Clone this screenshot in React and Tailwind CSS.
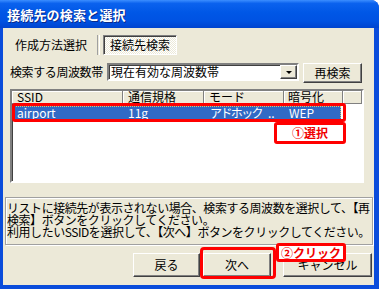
export default function App() {
  const raised =
    "bg-[#ECE9D8] border border-t-white border-l-white border-r-[#404040] border-b-[#404040] shadow-[inset_-1px_-1px_0_#808080]";
  const sunken =
    "border-2 border-t-[#808080] border-l-[#808080] border-r-white border-b-white shadow-[inset_1px_1px_0_#404040]";
  return (
    <div className="w-[379px] h-[289px] bg-[#0A4CDB] rounded-tr-[8px] flex flex-col overflow-hidden font-['Noto_Sans_CJK_JP',sans-serif] text-black">
      {/* Title bar */}
      <div className="h-[28px] shrink-0 flex items-center pl-[7px] bg-[linear-gradient(to_bottom,#3C8EFF_0%,#0B62EE_12%,#0057E6_45%,#0052E2_75%,#0044CF_100%)]">
        <span className="text-white text-[13px] font-bold leading-none tracking-[0.2px] [text-shadow:1px_1px_0_#0A2A8A] whitespace-nowrap">
          接続先の検索と選択
        </span>
      </div>

      {/* Body */}
      <div className="relative flex-1 ml-[3px] mr-[5px] mb-[4px] bg-[#ECE9D8] flex flex-col text-[12px] leading-none">
        {/* Tabs */}
        <div className="mt-[7px] h-[20px] flex items-center">
          <span className="ml-[12px] w-[79px] whitespace-nowrap">作成方法選択</span>
          <div className="ml-[3px] w-[3px] h-[20px] border-l border-l-[#A0A0A0] border-r border-r-white" />
          <div className="ml-[3px] w-[74px] h-[20px] flex items-center justify-center border border-t-[#808080] border-l-[#808080] border-r-white border-b-white shadow-[inset_1px_1px_0_#404040] bg-[repeating-conic-gradient(#ffffff_0%_25%,#ece9d8_0%_50%)] bg-[length:2px_2px] whitespace-nowrap">
            接続先検索
          </div>
        </div>

        {/* Band row */}
        <div className="mt-[8px] h-[20px] flex items-start">
          <span className="ml-[7px] w-[97px] mt-[3px] whitespace-nowrap tracking-[-0.4px]">検索する周波数帯</span>
          <div className={`w-[192px] h-[18px] bg-white flex items-center ${sunken}`}>
            <span className="ml-[2px] flex-1 whitespace-nowrap">現在有効な周波数帯</span>
            <div className={`w-[17px] h-[14px] flex items-center justify-center ${raised}`}>
              <div className="w-0 h-0 border-l-[3px] border-r-[3px] border-t-[3px] border-l-transparent border-r-transparent border-t-black" />
            </div>
          </div>
          <div className={`ml-[4px] w-[59px] h-[20px] flex items-center justify-center whitespace-nowrap ${raised}`}>再検索</div>
        </div>

        {/* List */}
        <div className={`mt-[6px] ml-[7px] w-[354px] h-[94px] bg-white flex flex-col ${sunken}`}>
          <div className="h-[13px] flex bg-[#ECE9D8] text-[12px] whitespace-nowrap">
            <div className="w-[111px] pl-[5px] flex items-center border-r border-r-[#808080] border-b border-b-[#808080] shadow-[inset_1px_1px_0_#fff]">SSID</div>
            <div className="w-[81px] pl-[5px] flex items-center border-r border-r-[#808080] border-b border-b-[#808080] shadow-[inset_1px_1px_0_#fff]">通信規格</div>
            <div className="w-[80px] pl-[5px] flex items-center border-r border-r-[#808080] border-b border-b-[#808080] shadow-[inset_1px_1px_0_#fff]">モード</div>
            <div className="w-[59px] pl-[4px] flex items-center border-r border-r-[#808080] border-b border-b-[#808080] shadow-[inset_1px_1px_0_#fff]">暗号化</div>
            <div className="flex-1 border-r border-r-[#808080] border-b border-b-[#808080] shadow-[inset_1px_1px_0_#fff]" />
          </div>
          <div className="mt-[2px] ml-[1px] w-[328px] h-[14px] bg-[#316AC5] text-white flex items-center whitespace-nowrap outline outline-dotted outline-[#D8C070] -outline-offset-1">
            <div className="w-[108px] pl-[4px]">airport</div>
            <div className="w-[81px] pl-[7px]">11g</div>
            <div className="w-[80px] pl-[8px] flex">
              <span className="tracking-[-1.6px]">アドホック</span>
              <span className="ml-[6px]">..</span>
            </div>
            <div className="w-[59px] pl-[7px]">WEP</div>
          </div>
        </div>

        {/* Info box */}
        <div className="mt-[14px] ml-[2px] w-[368px] h-[48px] border border-[#A0A0A0] shadow-[inset_1px_1px_0_#fff,1px_1px_0_#fff] pt-[4px] pl-[1px] text-[12px] leading-[12px] whitespace-nowrap tracking-[-0.45px]">
          リストに接続先が表示されない場合、検索する周波数を選択して、【再
          <br />
          検索】ボタンをクリックしてください。
          <br />
          利用したいSSIDを選択して、【次へ】ボタンをクリックしてください。
        </div>

        {/* Buttons */}
        <div className="mt-[8px] h-[24px] flex whitespace-nowrap">
          <div className={`ml-[130px] w-[67px] h-[24px] flex items-center justify-center ${raised}`}>戻る</div>
          <div className={`ml-[3px] w-[68px] h-[24px] flex items-center justify-center ${raised}`}>次へ</div>
          <div className={`ml-[12px] w-[89px] h-[24px] flex items-center justify-center ${raised}`}>キャンセル</div>
        </div>

        {/* Annotations */}
        <div className="absolute left-[9px] top-[75px] w-[334px] h-[19px] border-[3px] border-[#FF0000] rounded-[3px]" />
        <div className="absolute left-[271px] top-[94px] w-[72px] h-[22px] border-[3px] border-[#FF0000] rounded-[3px] bg-white flex items-center justify-center text-[#F00000] font-bold text-[12px] whitespace-nowrap">
          ①選択
        </div>
        <div className="absolute left-[197px] top-[219px] w-[76px] h-[32px] border-[3px] border-[#FF0000] rounded-[4px]" />
        <div className="absolute left-[273px] top-[215px] w-[70px] h-[19px] border-[3px] border-[#FF0000] rounded-[3px] bg-white flex items-center justify-center text-[#F00000] font-bold text-[12px] whitespace-nowrap">
          ②クリック
        </div>
      </div>
    </div>
  );
}
